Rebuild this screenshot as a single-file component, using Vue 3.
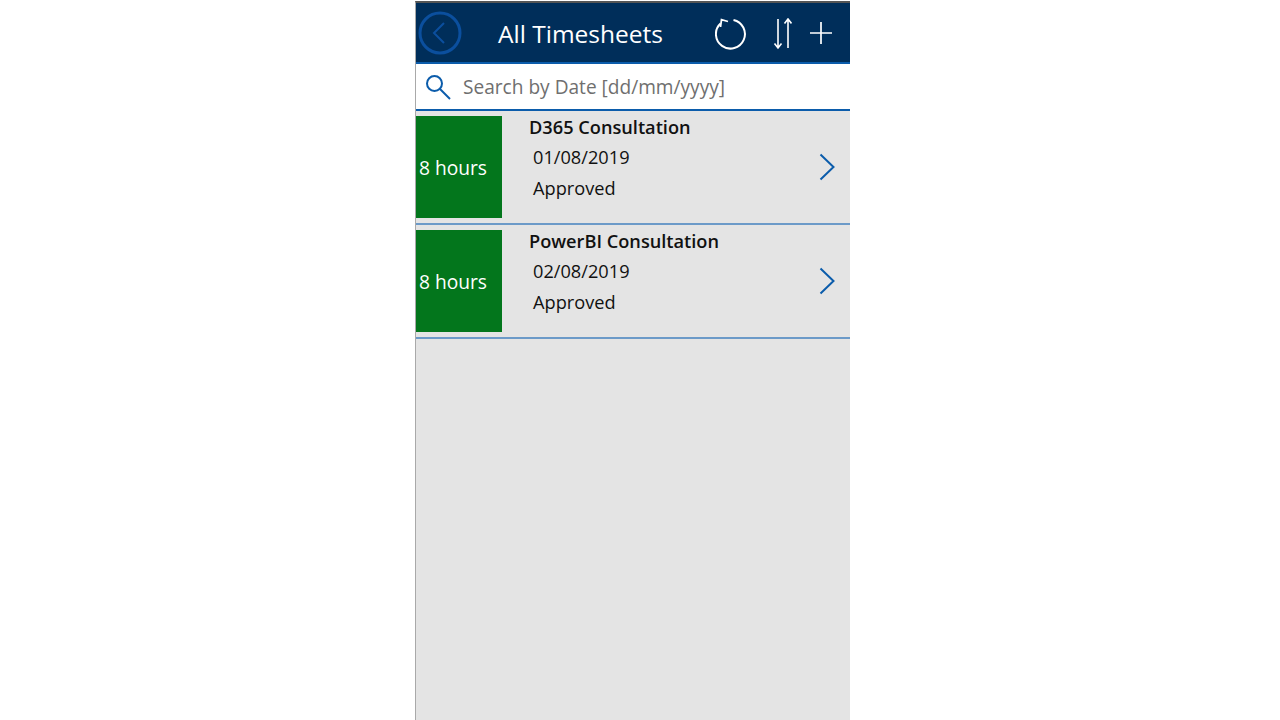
<script setup>
const rows = [
  { id: 1, hours: '8 hours', title: 'D365 Consultation', date: '01/08/2019', status: 'Approved' },
  { id: 2, hours: '8 hours', title: 'PowerBI Consultation', date: '02/08/2019', status: 'Approved' },
];
</script>

<template>
  <div class="page">
    <div class="phone">
      <header class="header">
        <button class="back" aria-label="Back">
          <svg width="44" height="44" viewBox="0 0 44 44" fill="none" stroke="#0b4f9e">
            <circle cx="22" cy="22" r="20" stroke-width="3" />
            <path d="M26 12 L16 22 L26 32" stroke-width="2" />
          </svg>
        </button>
        <h1 class="title">All Timesheets</h1>
        <svg class="refresh" width="32" height="32" viewBox="0 0 32 32" fill="none" stroke="#fff" stroke-width="2">
          <path d="M18.500 1.900 A14.500 14.500 0 1 1 5.500 5.500" />
          <path d="M13 3.500 L6.500 1.600 L5.500 9" stroke-width="1.800" />
        </svg>
        <svg class="sort" width="20" height="32" viewBox="0 0 20 32" fill="none" stroke="#fff" stroke-width="1.600">
          <path d="M6 1 V30 M2.500 25.500 L6 30 L9.500 25.500" />
          <path d="M16 30 V1 M12.500 5.500 L16 1 L19.500 5.500" />
        </svg>
        <svg class="plus" width="24" height="24" viewBox="0 0 24 24" fill="none" stroke="#fff" stroke-width="1.700">
          <path d="M12 1 V23 M1 12 H23" />
        </svg>
      </header>
      <div class="search">
        <svg width="28" height="28" viewBox="0 0 28 28" fill="none" stroke="#0b5cab">
          <circle cx="10.500" cy="10.500" r="7.500" stroke-width="2" />
          <path d="M16 16 L26 26" stroke-width="2" />
        </svg>
        <span class="placeholder">Search by Date [dd/mm/yyyy]</span>
      </div>
      <div class="list">
        <div v-for="row in rows" :key="row.id" class="row">
          <div class="hours">{{ row.hours }}</div>
          <div class="info">
            <div class="name">{{ row.title }}</div>
            <div class="line">{{ row.date }}</div>
            <div class="line">{{ row.status }}</div>
          </div>
          <svg class="chevron" width="18" height="28" viewBox="0 0 18 28" fill="none" stroke="#0b5cab" stroke-width="2">
            <path d="M2.500 1.500 L15.500 14 L2.500 26.500" />
          </svg>
        </div>
      </div>
    </div>
  </div>
</template>

<style scoped>
.page {
  height: 720px;
  background: #fff;
  display: flex;
  overflow: hidden;
  font-family: "Open Sans", sans-serif;
  padding-left: 415px;
}
.phone {
  width: 435px;
  height: 719px;
  margin-top: 1px;
  display: flex;
  flex-direction: column;
  border-left: 1px solid #a9a9a9;
  border-top: 2px solid #555;
  box-sizing: border-box;
  background: #e4e4e4;
}
.header {
  height: 61px;
  flex: none;
  box-sizing: border-box;
  background: #002e5a;
  border-bottom: 2px solid #0b5cab;
  display: flex;
  align-items: center;
  padding-left: 2px;
}
.back {
  padding: 0;
  border: 0;
  background: none;
  width: 44px;
  height: 44px;
  display: block;
  margin-top: 1px;
}
.title {
  margin: 1px 0 0 36px;
  font-size: 24.500px;
  font-weight: 400;
  color: #fff;
  width: 217px;
  white-space: nowrap;
}
.refresh {
  flex: none;
  margin-top: 3px;
}
.sort {
  flex: none;
  margin-left: 25px;
  margin-top: 3px;
}
.plus {
  flex: none;
  margin-left: 17px;
  margin-top: 1px;
}
.search {
  height: 47px;
  flex: none;
  box-sizing: border-box;
  background: #fff;
  border-bottom: 2px solid #0b5cab;
  display: flex;
  align-items: center;
  padding-left: 8px;
}
.placeholder {
  margin-left: 11px;
  font-size: 19.100px;
  color: #6f6f6f;
  white-space: nowrap;
}
.list {
  flex: 1;
}
.row {
  height: 114px;
  box-sizing: border-box;
  border-bottom: 2px solid #6c9ac8;
  display: flex;
  align-items: center;
  padding-top: 6px;
  padding-bottom: 6px;
}
.hours {
  width: 86px;
  height: 102px;
  flex: none;
  background: #03761c;
  color: #fff;
  font-size: 19.200px;
  display: flex;
  align-items: center;
  padding-left: 3px;
  box-sizing: border-box;
}
.info {
  width: 316px;
  flex: none;
  color: #111;
  font-size: 18.200px;
  padding-left: 27px;
  box-sizing: border-box;
  margin-top: -13px;
}
.name {
  font-weight: 600;
  line-height: 24px;
  margin-bottom: 6.500px;
}
.line {
  padding-left: 4px;
  line-height: 24px;
  margin-bottom: 6.500px;
}
.chevron {
  flex: none;
}
</style>

<style>
html, body {
  margin: 0;
  background: #fff;
}
</style>
